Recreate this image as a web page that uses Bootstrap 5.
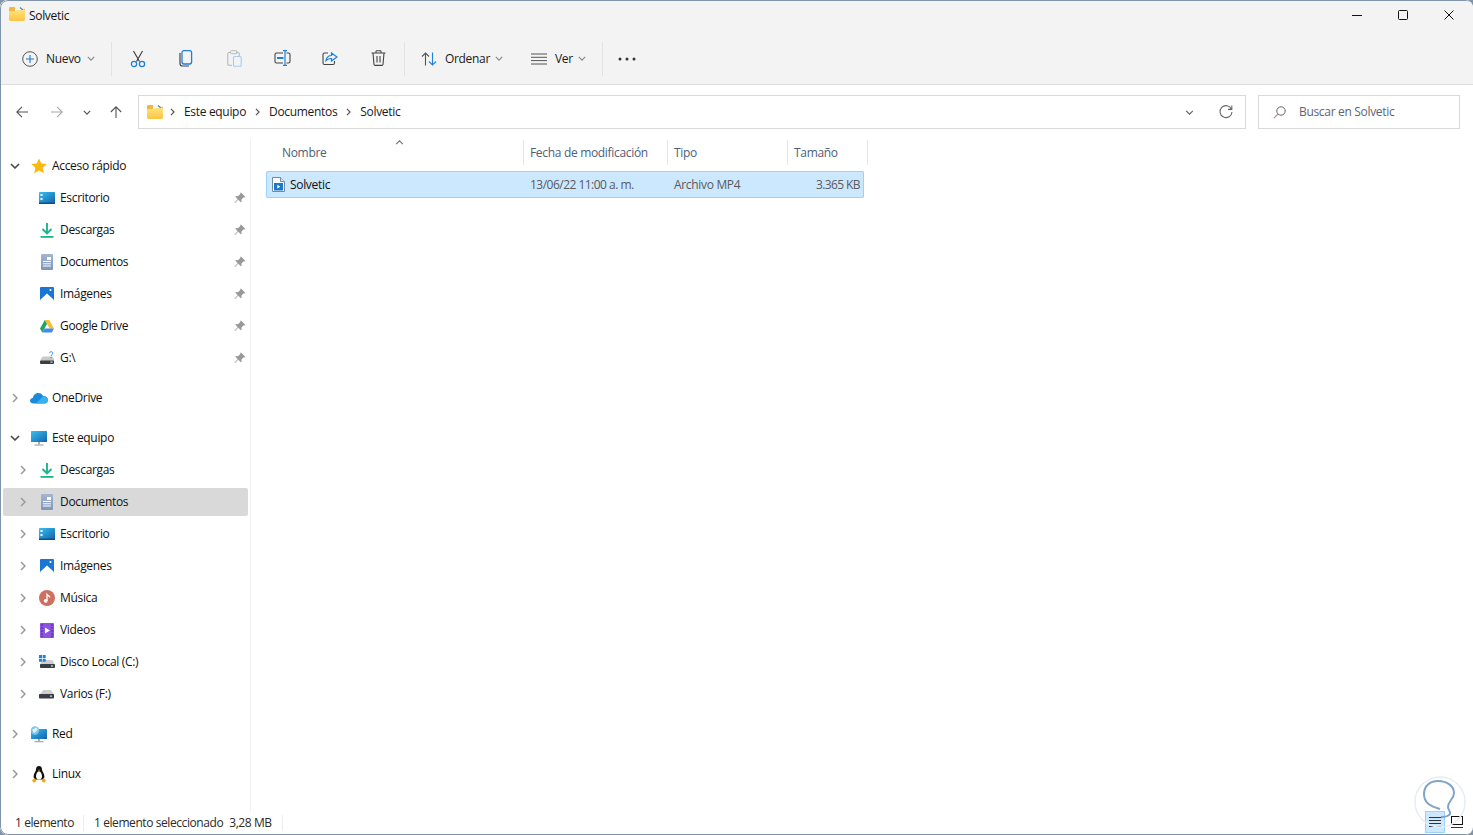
<!doctype html>
<html lang="es">
<head>
<meta charset="utf-8">
<title>Solvetic</title>
<link href="https://cdn.jsdelivr.net/npm/bootstrap@5.3.0/dist/css/bootstrap.min.css" rel="stylesheet">
<style>
html,body{height:100%;margin:0;overflow:hidden}
body{background:#7e94aa;font-family:"Open Sans","Noto Sans",sans-serif;font-size:12px;line-height:16px;letter-spacing:-.32px;color:#1a1a1a}
svg{display:block;flex:none}
.win{position:relative;width:1473px;height:835px;background:#fff;border-radius:8px;overflow:hidden}
.win::after{content:"";position:absolute;inset:0 -2px 0 0;border:1px solid #7e94aa;border-radius:8px;pointer-events:none}
.titlebar{height:36px;background:#f3f3f3;padding-left:9px;padding-bottom:4px}
.titlebar .tfold{margin-bottom:4px}
.titlebar .ttl{margin-left:4px;color:#111}
.winctls{margin-right:1px;align-self:flex-start}
.winctl{width:46px;height:30px;justify-content:center}
.toolbar{height:49px;background:#f3f3f3;border-bottom:1px solid #dedede;padding-left:22px;padding-bottom:3px}
.tsep{width:1px;height:34px;background:#e3e3e3;flex:none}
.tslot{width:48px;justify-content:center}
.lbl{white-space:nowrap;color:#1a1a1a}
.w-nuevo{width:36px}.w-ordenar{width:45px}.w-ver{width:18px}
.addr{height:54px;padding:10px 13px 10px 16px}
.addrbox{height:34px;border:1px solid #d9d9d9;padding-left:8px;padding-right:11px}
.crumb{color:#1a1a1a;white-space:nowrap}
.searchbox{width:202px;height:34px;border:1px solid #d9d9d9;padding-left:14px;color:#5b6675}
.side{width:251px;flex:none;border-right:1px solid #f0f0f0;padding-top:13px}
.grp{display:flex;flex-direction:column;gap:4px;margin-bottom:12px}
.trow{height:28px;width:245px;margin-left:3px;border-radius:2px;white-space:nowrap;color:#111}
.trow.root{padding-left:6px}
.trow.kid{padding-left:14px}
.trow.sel{background:#d9d9d9}
.chv{width:12px;flex:none;display:flex;justify-content:center}
.ico{width:16px;margin:0 5px 0 10px;flex:none;display:flex;justify-content:center}
.pin{margin-left:auto;margin-right:2px}
.listarea{padding-left:15px}
.hdr{display:grid;grid-template-columns:258px 144px 120px 80px;height:27px;padding-top:1px;color:#4c607a}
.hcell{position:relative;border-right:1px solid #e5e5e5;padding:1px 0 0 6px;display:flex;align-items:center;height:25px}
.hcell.first{padding-left:16px}
.sortup{position:absolute;left:129px;top:0}
.frow{display:grid;grid-template-columns:258px 144px 120px 76px;width:598px;height:27px;margin-top:5px;background:#cce8ff;box-shadow:inset 0 0 0 1px #99d1ff;border-radius:2px;align-items:center;color:#5a5a5a}
.fname{padding-left:6px;color:#111;gap:5px}
.fcell{padding-left:6px}
.fdate{letter-spacing:-.52px}
.fsize{text-align:right;padding-right:4px;letter-spacing:-.6px}
.status{height:23px;padding-left:15px;padding-bottom:1px;color:#2a2a2a;position:relative;letter-spacing:-.42px}
.ssep{width:1px;height:16px;background:#ececec;flex:none}
.vbtn{position:absolute;top:-1px;left:1425px;width:20px;height:22px;background:#cce8ff;border:1px solid #99d1ff;display:flex;align-items:center;justify-content:center}
.vbtn2{position:absolute;top:4px;left:1451px}
.wmark{position:absolute;left:1410px;top:770px;pointer-events:none}
</style>
</head>
<body>
<svg width="0" height="0" class="position-absolute">
<defs>
<linearGradient id="gf" x1="0" y1="0" x2="0" y2="1"><stop offset="0" stop-color="#ffe27d"/><stop offset="1" stop-color="#fbc443"/></linearGradient>
<linearGradient id="gb" x1="0" y1="0" x2="1" y2="1"><stop offset="0" stop-color="#38c0f2"/><stop offset="1" stop-color="#1362ab"/></linearGradient>
<linearGradient id="gd" x1="0" y1="0" x2="0" y2="1"><stop offset="0" stop-color="#a3b5d0"/><stop offset="1" stop-color="#7f96bb"/></linearGradient>
<symbol id="i-folder" viewBox="0 0 16 14"><path d="M0 1.500C0 .7.6 0 1.400 0h4l1.800 1.800H16V5H0z" fill="#f0b840"/><rect x="6" y="1.500" width="9" height="3" fill="#fff"/><path d="M11 .5l3.500 3" stroke="#2f8fd8" stroke-width="1.300"/><path d="M0 4.200h6.500l1.500-1.200h8v9.600c0 .8-.6 1.400-1.400 1.400H1.400C.6 14 0 13.400 0 12.600z" fill="url(#gf)"/></symbol>
<symbol id="i-star" viewBox="0 0 16 16"><path d="M8 .5l2.300 5 5.400.6-4 3.700 1.100 5.400L8 12.500l-4.800 2.700 1.100-5.400-4-3.700 5.400-.6z" fill="#fbb80f"/></symbol>
<symbol id="i-desk" viewBox="0 0 16 12"><rect width="16" height="11.500" rx=".8" fill="url(#gb)"/><rect x="1.500" y="2" width="2" height="2" fill="#fff"/><rect x="1.500" y="6" width="2" height="2" fill="#fff"/><rect y="10.500" width="16" height="1.500" fill="#0f4f90"/></symbol>
<symbol id="i-down" viewBox="0 0 16 16"><path d="M8 1v10.500M3.500 7l4.500 4.500L12.500 7" fill="none" stroke="#1db58f" stroke-width="1.900"/><rect x="1.500" y="14" width="13" height="1.800" fill="#1db58f"/></symbol>
<symbol id="i-docs" viewBox="0 0 14 16"><rect x="1" width="12" height="16" rx="1" fill="url(#gd)"/><rect x="7" y="3" width="4" height="3" fill="#fff"/><path d="M3 7.500h8M3 9.800h8M3 12h8" stroke="#fff" stroke-width="1"/></symbol>
<symbol id="i-img" viewBox="0 0 14 14"><rect width="14" height="14" rx="1" fill="#1976d6"/><path d="M0 13L7 6.500l7 6.500v0a1 1 0 0 1-1 1H1a1 1 0 0 1-1-1z" fill="#fff"/><circle cx="10.500" cy="3" r="1.100" fill="#fff"/></symbol>
<symbol id="i-gd" viewBox="0 0 14 13"><path d="M4.800 0h4.400l4.800 8.500H9.600z" fill="#f9c02e"/><path d="M4.800 0L0 8.500l2.200 4L7 4z" fill="#1fa463"/><path d="M4.500 8.500H14l-2.200 4H2.300z" fill="#4688f4"/></symbol>
<symbol id="i-driveg" viewBox="0 0 16 14"><path d="M2 7.500l2-2h9l2 2v4H1z" fill="#c9c9c9"/><rect x="1" y="9.500" width="14" height="3.500" rx="1" fill="#3b3f45"/><rect x="11.500" y="10.600" width="2" height="1" fill="#fff"/><path d="M10.500 2.200c0-2 3.300-2 3.300 0 0 1.300-1.700 1.300-1.700 2.800M12.100 6v1.200" fill="none" stroke="#2b8fdc" stroke-width="1"/></symbol>
<symbol id="i-cloud" viewBox="0 0 18 12"><path d="M3.500 11.500C1.500 11.500 0 10.300 0 8.700c0-1.500 1.100-2.600 2.800-2.800C3.300 3.300 5.400 1 8.300 1c2.200 0 3.900 1.200 4.700 3 2.800-.3 5 1.600 5 4 0 2-1.500 3.500-3.600 3.500z" fill="#1a8adb"/><path d="M6 11.500L13 4.200c2.800-.1 5 1.600 5 3.800 0 2-1.500 3.500-3.600 3.500z" fill="#3ab0ec"/></symbol>
<symbol id="i-pc" viewBox="0 0 16 15"><rect width="16" height="11" rx=".6" fill="url(#gb)"/><rect x="7" y="11" width="2" height="2.500" fill="#a9afb6"/><rect x="3.500" y="13.400" width="9" height="1.300" fill="#a9afb6"/></symbol>
<symbol id="i-music" viewBox="0 0 16 16"><circle cx="8" cy="8" r="8" fill="#cf6f5f"/><circle cx="6.700" cy="10.800" r="1.900" fill="#fff"/><path d="M8 11V4.500c1 1.300 2.700 1.300 2.800 3" fill="none" stroke="#fff" stroke-width="1.300"/></symbol>
<symbol id="i-vid" viewBox="0 0 14 15"><rect width="14" height="15" rx="1" fill="#8c52e0"/><path d="M1.500 2h1M1.500 5h1M1.500 8h1M1.500 11h1M11.500 2h1M11.500 5h1M11.500 8h1M11.500 11h1M1.500 13.500h1M11.500 13.500h1" stroke="#3d1f80" stroke-width="1.300"/><path d="M5 4.500l5 3-5 3z" fill="#fff"/></symbol>
<symbol id="i-c" viewBox="0 0 16 14"><path d="M2 7l1-2h10l2 2.500V10H1z" fill="#cfcfcf"/><rect x="1" y="9" width="15" height="4" rx=".8" fill="#3b3f45"/><rect x="12" y="10.500" width="2" height="1" fill="#fff"/><rect width="3" height="3" fill="#1a86d8"/><rect x="3.700" width="3" height="3" fill="#1a86d8"/><rect y="3.700" width="3" height="3" fill="#1a86d8"/><rect x="3.700" y="3.700" width="3" height="3" fill="#1a86d8"/></symbol>
<symbol id="i-f" viewBox="0 0 16 10"><path d="M2 4l2-3h8l2 3 2 2H0z" fill="#cfcfcf"/><rect y="5" width="15" height="4.500" rx=".8" fill="#3b3f45"/><rect x="11" y="6.600" width="2" height="1" fill="#fff"/></symbol>
<symbol id="i-net" viewBox="0 0 18 17"><rect x="1" y="3" width="16" height="10" rx=".6" fill="url(#gb)"/><rect x="8" y="13" width="2" height="2" fill="#a9afb6"/><rect x="4.500" y="15" width="9" height="1.300" fill="#a9afb6"/><circle cx="5" cy="4.500" r="4.200" fill="#7cc4ec"/><path d="M2 3c1 1 2 0 3-1s2-.5 2.500 1S6 5 5 6.500 3 6 2 3z" fill="#e4f1f9"/></symbol>
<symbol id="i-tux" viewBox="0 0 14 17"><path d="M7 0c2.200 0 3 1.700 3 3.500 0 2 2.400 3.600 2.400 7 0 1.400-.6 2.300-1.400 3H3c-.8-.7-1.400-1.600-1.400-3 0-3.400 2.400-5 2.400-7C4 1.700 4.800 0 7 0z" fill="#111"/><path d="M7 5.200c1.600 0 3 3 3 5.300 0 2-1.400 3-3 3s-3-1-3-3c0-2.300 1.400-5.300 3-5.300z" fill="#fff"/><path d="M6 3.800h2L7 5z" fill="#f0a810"/><path d="M0 14.200l2.800-2.200 1.600 3.200-2.800 1.500zM14 14.200l-2.800-2.200-1.600 3.200 2.800 1.500z" fill="#f0a810"/></symbol>
<symbol id="i-pin" viewBox="0 0 12 12"><path d="M7 .5l4.500 4.500-1 .6-.8-.3L7.500 7.500 7.600 9.500 6.800 10.300 4.200 7.800 1 11 .5 10.500 3.700 7.300 1.300 4.800 2 4l2 .2L6.200 2.100 6.100 1.300z" fill="#9a9a9a"/></symbol>
<symbol id="i-cd" viewBox="0 0 10 6"><path d="M1 1l4 4 4-4" fill="none" stroke="currentColor" stroke-width="1.500"/></symbol>
<symbol id="i-cr" viewBox="0 0 6 10"><path d="M1 1l4 4-4 4" fill="none" stroke="currentColor" stroke-width="1.500"/></symbol>
<symbol id="i-file" viewBox="0 0 13 15"><path d="M.5.500h8l4 4v10H.5z" fill="#fff" stroke="#6f8aa5"/><path d="M8.500.5v4h4" fill="#dfe8f0" stroke="#6f8aa5"/><rect x="2" y="6" width="9" height="7.500" fill="#1c79c8"/><path d="M5.300 7.800l3 1.900-3 1.900z" fill="#fff"/></symbol>
</defs>
</svg>

<div class="win d-flex flex-column">

  <div class="titlebar d-flex align-items-center flex-shrink-0">
    <svg class="tfold" width="16" height="14"><use href="#i-folder"/></svg>
    <span class="ttl">Solvetic</span>
    <div class="winctls d-flex ms-auto">
      <div class="winctl d-flex align-items-center"><svg width="12" height="12" viewBox="0 0 12 12"><path d="M1 6.500h10" stroke="#111" stroke-width="1.100"/></svg></div>
      <div class="winctl d-flex align-items-center"><svg width="12" height="12" viewBox="0 0 12 12"><rect x="1.500" y="1.500" width="9" height="9" rx="1" fill="none" stroke="#111"/></svg></div>
      <div class="winctl d-flex align-items-center"><svg width="12" height="12" viewBox="0 0 12 12"><path d="M1.500 1.500l9 9M10.500 1.500l-9 9" stroke="#111"/></svg></div>
    </div>
  </div>

  <div class="toolbar d-flex align-items-center">
    <svg width="16" height="16" viewBox="0 0 16 16"><circle cx="8" cy="8" r="7.300" fill="none" stroke="#555"/><path d="M8 4v8M4 8h8" stroke="#1677d2" stroke-width="1.100"/></svg>
    <span class="lbl w-nuevo ms-2">Nuevo</span>
    <svg class="tchev" width="8" height="5" style="margin-left:5px;color:#8a8a8a"><use href="#i-cd"/></svg>
    <div class="tsep" style="margin-left:16px"></div>
    <div class="d-flex" style="margin-left:2px">
      <div class="tslot d-flex"><svg width="16" height="18" viewBox="0 0 16 18"><path d="M3.500 1l6 10.500M12.500 1l-6 10.500" stroke="#444" stroke-width="1.200"/><circle cx="4" cy="14" r="2.600" fill="none" stroke="#1f80da" stroke-width="1.300"/><circle cx="12" cy="14" r="2.600" fill="none" stroke="#1f80da" stroke-width="1.300"/></svg></div>
      <div class="tslot d-flex"><svg width="14" height="17" viewBox="0 0 14 17"><path d="M1 3v10.500C1 15 2 16 3.500 16h6.500" fill="none" stroke="#444" stroke-width="1.200"/><rect x="3" y=".7" width="9.600" height="13.300" rx="2" fill="none" stroke="#1f80da" stroke-width="1.300"/></svg></div>
      <div class="tslot d-flex"><svg width="15" height="17" viewBox="0 0 15 17"><path d="M4 2.500H2C1.200 2.500.8 3 .8 3.700V14c0 .8.500 1.300 1.200 1.300h3M9 2.500h2c.8 0 1.200.5 1.200 1.200V6" fill="none" stroke="#b8b8b8" stroke-width="1.100"/><rect x="3.500" y=".7" width="6.500" height="3" rx="1" fill="none" stroke="#b8b8b8"/><rect x="6.500" y="6.500" width="7.700" height="9.800" rx="1" fill="none" stroke="#a6cdf0" stroke-width="1.100"/></svg></div>
      <div class="tslot d-flex"><svg width="17" height="16" viewBox="0 0 17 16"><path d="M9 3H2.500C1.500 3 1 3.500 1 4.500v7c0 1 .5 1.500 1.500 1.500H9M12.500 3H14.500c1 0 1.500.5 1.500 1.500v7c0 1-.5 1.500-1.500 1.500h-2" fill="none" stroke="#444" stroke-width="1.100"/><path d="M3 8h6.500" stroke="#1f80da" stroke-width="2"/><path d="M9 .7h4M9 15.300h4M11 .7v14.600" fill="none" stroke="#1f80da" stroke-width="1.200"/></svg></div>
      <div class="tslot d-flex"><svg width="16" height="16" viewBox="0 0 16 16"><path d="M6 3H2.500C1.500 3 1 3.500 1 4.500V13c0 1 .5 1.500 1.500 1.500H11c1 0 1.500-.5 1.500-1.500v-2" fill="none" stroke="#444" stroke-width="1.100"/><path d="M4 10.500C4.500 7.500 6.500 5.500 9.500 5.500V3L15 7l-5.500 4V8.500C7.500 8.500 5.500 9 4 10.500z" fill="none" stroke="#1f80da" stroke-width="1.200"/></svg></div>
      <div class="tslot d-flex"><svg width="15" height="16" viewBox="0 0 15 16"><path d="M.5 3h14M5 3V1.500C5 1 5.500.7 6 .7h3c.5 0 1 .3 1 .8V3M2 3l1 11.500c.1.500.5.9 1 .9h7c.5 0 .9-.4 1-.9L13 3M6 6v6.500M9 6v6.500" fill="none" stroke="#444" stroke-width="1.100"/></svg></div>
    </div>
    <div class="tsep" style="margin-left:2px"></div>
    <svg class="ms-3" width="16" height="14" viewBox="0 0 16 14"><path d="M4.500 13.500V1M1 4.500L4.500 1 8 4.500" fill="none" stroke="#555" stroke-width="1.100"/><path d="M11.500 .5V13M8 9.500l3.500 3.500 3.500-3.500" fill="none" stroke="#1f80da" stroke-width="1.100"/></svg>
    <span class="lbl w-ordenar ms-2">Ordenar</span>
    <svg width="8" height="5" style="margin-left:5px;color:#8a8a8a"><use href="#i-cd"/></svg>
    <svg width="16" height="12" viewBox="0 0 16 12" style="margin-left:28px"><path d="M0 1h16M0 4.300h16M0 7.600h16M0 11h16" stroke="#555" stroke-width="1"/></svg>
    <span class="lbl w-ver ms-2">Ver</span>
    <svg width="8" height="5" style="margin-left:5px;color:#8a8a8a"><use href="#i-cd"/></svg>
    <div class="tsep ms-3"></div>
    <svg width="20" height="4" viewBox="0 0 20 4" style="margin-left:14px"><circle cx="3" cy="2" r="1.500" fill="#333"/><circle cx="10" cy="2" r="1.500" fill="#333"/><circle cx="17" cy="2" r="1.500" fill="#333"/></svg>
  </div>

  <div class="addr d-flex align-items-center">
    <svg width="12" height="12" viewBox="0 0 12 12"><path d="M12 6H.8M6 .8L.8 6 6 11.200" fill="none" stroke="#555" stroke-width="1.100"/></svg>
    <svg width="12" height="12" viewBox="0 0 12 12" style="margin-left:23px"><path d="M0 6h11.200M6 .8L11.200 6 6 11.200" fill="none" stroke="#a8a8a8" stroke-width="1.100"/></svg>
    <svg width="8" height="5" style="margin-left:20px;color:#555"><use href="#i-cd"/></svg>
    <svg width="12" height="12" viewBox="0 0 12 12" style="margin-left:19px"><path d="M6 12V.8M.8 6L6 .8 11.200 6" fill="none" stroke="#555" stroke-width="1.100"/></svg>
    <div class="addrbox d-flex align-items-center flex-grow-1" style="margin-left:16px">
      <svg width="16" height="14"><use href="#i-folder"/></svg>
      <svg width="5" height="8" style="margin:0 9px 0 7px;color:#555"><use href="#i-cr"/></svg>
      <span class="crumb">Este equipo</span>
      <svg width="5" height="8" style="margin:0 9px;color:#555"><use href="#i-cr"/></svg>
      <span class="crumb">Documentos</span>
      <svg width="5" height="8" style="margin:0 9px;color:#555"><use href="#i-cr"/></svg>
      <span class="crumb">Solvetic</span>
      <svg class="ms-auto" width="9" height="5" style="margin-right:24px;color:#666"><use href="#i-cd"/></svg>
      <svg width="16" height="16" viewBox="0 0 16 16"><path d="M13.500 5.200A6 6 0 1 0 14 8M13.800 1.500v3.900H10" fill="none" stroke="#666" stroke-width="1.100"/></svg>
    </div>
    <div class="searchbox d-flex align-items-center" style="margin-left:12px">
      <svg width="13" height="13" viewBox="0 0 13 13"><circle cx="8" cy="5" r="4.200" fill="none" stroke="#666"/><path d="M5 8L.8 12.200" stroke="#b88" stroke-width="1.100"/></svg>
      <span style="margin-left:13px">Buscar en Solvetic</span>
    </div>
  </div>

  <div class="d-flex flex-grow-1" style="min-height:0">
    <nav class="side">
      <div class="grp">
        <div class="trow root d-flex align-items-center"><span class="chv"><svg width="10" height="6" style="color:#444"><use href="#i-cd"/></svg></span><span class="ico"><svg width="16" height="16"><use href="#i-star"/></svg></span>Acceso rápido</div>
        <div class="trow kid d-flex align-items-center"><span class="chv"></span><span class="ico"><svg width="16" height="12"><use href="#i-desk"/></svg></span>Escritorio<svg class="pin" width="12" height="12"><use href="#i-pin"/></svg></div>
        <div class="trow kid d-flex align-items-center"><span class="chv"></span><span class="ico"><svg width="16" height="16"><use href="#i-down"/></svg></span>Descargas<svg class="pin" width="12" height="12"><use href="#i-pin"/></svg></div>
        <div class="trow kid d-flex align-items-center"><span class="chv"></span><span class="ico"><svg width="14" height="16"><use href="#i-docs"/></svg></span>Documentos<svg class="pin" width="12" height="12"><use href="#i-pin"/></svg></div>
        <div class="trow kid d-flex align-items-center"><span class="chv"></span><span class="ico"><svg width="14" height="14"><use href="#i-img"/></svg></span>Imágenes<svg class="pin" width="12" height="12"><use href="#i-pin"/></svg></div>
        <div class="trow kid d-flex align-items-center"><span class="chv"></span><span class="ico"><svg width="14" height="13"><use href="#i-gd"/></svg></span>Google Drive<svg class="pin" width="12" height="12"><use href="#i-pin"/></svg></div>
        <div class="trow kid d-flex align-items-center"><span class="chv"></span><span class="ico"><svg width="16" height="14"><use href="#i-driveg"/></svg></span>G:\<svg class="pin" width="12" height="12"><use href="#i-pin"/></svg></div>
      </div>
      <div class="grp">
        <div class="trow root d-flex align-items-center"><span class="chv"><svg width="6" height="10" style="color:#999"><use href="#i-cr"/></svg></span><span class="ico"><svg width="18" height="12"><use href="#i-cloud"/></svg></span>OneDrive</div>
      </div>
      <div class="grp">
        <div class="trow root d-flex align-items-center"><span class="chv"><svg width="10" height="6" style="color:#444"><use href="#i-cd"/></svg></span><span class="ico"><svg width="16" height="15"><use href="#i-pc"/></svg></span>Este equipo</div>
        <div class="trow kid d-flex align-items-center"><span class="chv"><svg width="6" height="10" style="color:#999"><use href="#i-cr"/></svg></span><span class="ico"><svg width="16" height="16"><use href="#i-down"/></svg></span>Descargas</div>
        <div class="trow kid sel d-flex align-items-center"><span class="chv"><svg width="6" height="10" style="color:#999"><use href="#i-cr"/></svg></span><span class="ico"><svg width="14" height="16"><use href="#i-docs"/></svg></span>Documentos</div>
        <div class="trow kid d-flex align-items-center"><span class="chv"><svg width="6" height="10" style="color:#999"><use href="#i-cr"/></svg></span><span class="ico"><svg width="16" height="12"><use href="#i-desk"/></svg></span>Escritorio</div>
        <div class="trow kid d-flex align-items-center"><span class="chv"><svg width="6" height="10" style="color:#999"><use href="#i-cr"/></svg></span><span class="ico"><svg width="14" height="14"><use href="#i-img"/></svg></span>Imágenes</div>
        <div class="trow kid d-flex align-items-center"><span class="chv"><svg width="6" height="10" style="color:#999"><use href="#i-cr"/></svg></span><span class="ico"><svg width="16" height="16"><use href="#i-music"/></svg></span>Música</div>
        <div class="trow kid d-flex align-items-center"><span class="chv"><svg width="6" height="10" style="color:#999"><use href="#i-cr"/></svg></span><span class="ico"><svg width="14" height="15"><use href="#i-vid"/></svg></span>Videos</div>
        <div class="trow kid d-flex align-items-center"><span class="chv"><svg width="6" height="10" style="color:#999"><use href="#i-cr"/></svg></span><span class="ico"><svg width="16" height="14"><use href="#i-c"/></svg></span>Disco Local (C:)</div>
        <div class="trow kid d-flex align-items-center"><span class="chv"><svg width="6" height="10" style="color:#999"><use href="#i-cr"/></svg></span><span class="ico"><svg width="16" height="10"><use href="#i-f"/></svg></span>Varios (F:)</div>
      </div>
      <div class="grp">
        <div class="trow root d-flex align-items-center"><span class="chv"><svg width="6" height="10" style="color:#999"><use href="#i-cr"/></svg></span><span class="ico"><svg width="18" height="17"><use href="#i-net"/></svg></span>Red</div>
      </div>
      <div class="grp">
        <div class="trow root d-flex align-items-center"><span class="chv"><svg width="6" height="10" style="color:#999"><use href="#i-cr"/></svg></span><span class="ico"><svg width="14" height="17"><use href="#i-tux"/></svg></span>Linux</div>
      </div>
    </nav>
    <main class="listarea flex-grow-1">
      <div class="hdr">
        <div class="hcell first">Nombre<svg class="sortup" width="9" height="5" style="color:#777"><use href="#i-cd" transform="matrix(1 0 0 -1 0 5)"/></svg></div>
        <div class="hcell">Fecha de modificación</div>
        <div class="hcell">Tipo</div>
        <div class="hcell">Tamaño</div>
      </div>
      <div class="frow">
        <div class="fname d-flex align-items-center"><svg width="13" height="15"><use href="#i-file"/></svg>Solvetic</div>
        <div class="fcell fdate">13/06/22 11:00 a. m.</div>
        <div class="fcell">Archivo MP4</div>
        <div class="fsize">3.365 KB</div>
      </div>
    </main>
  </div>

  <footer class="status d-flex align-items-center flex-shrink-0">
    <span>1 elemento</span>
    <div class="ssep" style="margin:0 10px 0 9px"></div>
    <span>1 elemento seleccionado</span>
    <span style="margin-left:6px">3,28 MB</span>
    <div class="ssep" style="margin-left:10px"></div>
    <div class="vbtn"><svg width="12" height="10" viewBox="0 0 12 10"><path d="M0 .5h12M0 3.500h12M0 6.500h12M0 9.500h12" stroke="#333"/></svg></div>
    <svg class="vbtn2" width="12" height="12" viewBox="0 0 12 12"><rect x=".5" y=".5" width="11" height="8" fill="none" stroke="#111"/><path d="M0 11.500h12" stroke="#333"/></svg>
  </footer>

  <svg class="wmark" width="60" height="60" viewBox="0 0 60 60" fill="none"><circle cx="30" cy="32" r="25" stroke="#e6edf5" stroke-width="1.500"/><path d="M30 39C24 37 14 35 14 24C14 16 20 11 28 11C37 11 44 16 44 23C44 29 38 31 38 37C38 40 41 41 40 44C38 47 33 47 31 47" stroke="#7fa3cb" stroke-width="2"/></svg>
</div>
</body>
</html>
